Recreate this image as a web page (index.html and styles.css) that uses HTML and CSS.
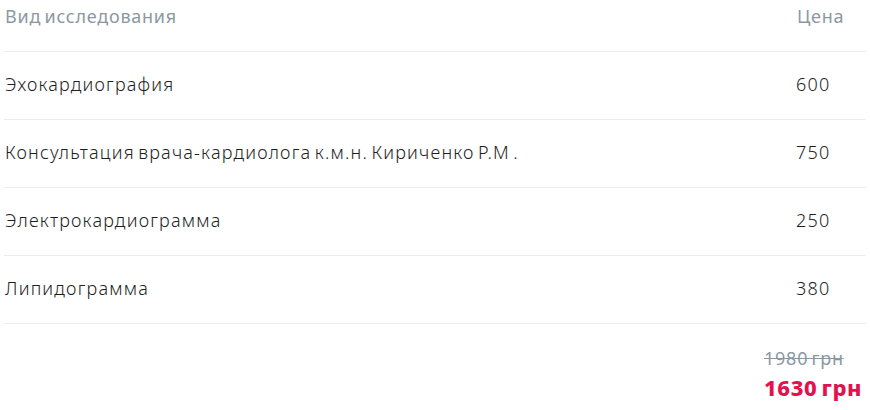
FILE: index.html
```html
<!DOCTYPE html>
<html lang="ru">
<head>
<meta charset="utf-8">
<link rel="stylesheet" href="styles.css">
</head>
<body>
<div class="price-table">
  <div class="row head">
    <div class="name">Вид исследования</div>
    <div class="price">Цена</div>
  </div>
  <div class="row">
    <div class="name">Эхокардиография</div>
    <div class="price">600</div>
  </div>
  <div class="row">
    <div class="name">Консультация врача-кардиолога к.м.н. Кириченко Р.М .</div>
    <div class="price">750</div>
  </div>
  <div class="row">
    <div class="name">Электрокардиограмма</div>
    <div class="price">250</div>
  </div>
  <div class="row">
    <div class="name">Липидограмма</div>
    <div class="price">380</div>
  </div>
</div>
<div class="total">
  <div class="old">1980 грн</div>
  <div class="new">1630 грн</div>
</div>
</body>
</html>
```
FILE: styles.css
```css
html, body {
  margin: 0;
  padding: 0;
  background: #fff;
}
body {
  font-family: "Noto Sans", sans-serif;
  font-weight: 300;
  color: #1e1e1e;
  font-size: 18px;
  letter-spacing: 1.2px;
  word-spacing: -2.5px;
}
.price-table {
  margin: 0 4px;
}
.row {
  display: grid;
  grid-template-columns: 1fr 70px;
  align-items: center;
  height: 67px;
  border-bottom: 1px solid #ececec;
}
.row > div {
  padding-bottom: 3px;
}
.row.head {
  height: 51px;
  align-items: start;
  color: #8b98a3;
  font-weight: 400;
  letter-spacing: 0.75px;
  word-spacing: -2px;
}
.row.head .name, .row.head .price {
  padding-top: 4px;
}
.row.head .price {
  padding-left: 1px;
}
.name {
  padding-left: 1px;
}
.total {
  display: flex;
  flex-direction: column;
  margin-left: 764px;
  padding-top: 20px;
}
.old {
  color: #8b98a3;
  font-weight: 400;
  letter-spacing: 0.75px;
  word-spacing: -2px;
  text-decoration: line-through;
  line-height: 28px;
}
.new {
  color: #e2124f;
  font-weight: 800;
  font-size: 22px;
  letter-spacing: 0.6px;
  word-spacing: -2px;
  line-height: 30px;
}
```
